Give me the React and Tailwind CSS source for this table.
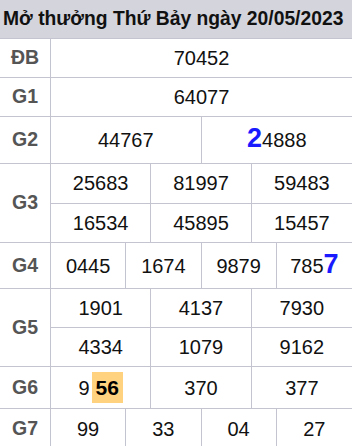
const line = "border-[#c4c4d0]";

function Row({ label, h, children }) {
  return (
    <div className={`flex border-t ${line} ${h}`}>
      <div
        className={`w-[51px] shrink-0 border-r ${line} flex items-center justify-center font-bold text-[19.5px] text-[#555]`}
      >
        {label}
      </div>
      <div className="flex-1 flex flex-col">{children}</div>
    </div>
  );
}

function Cells({ cols, items, className = "" }) {
  const grid = {
    1: "grid-cols-1",
    2: "grid-cols-2",
    3: "grid-cols-3",
    4: "grid-cols-4",
  }[cols];
  return (
    <div className={`grid ${grid} divide-x divide-[#c4c4d0] flex-1 ${className}`}>
      {items.map((it, i) => (
        <div key={i} className="flex items-center justify-center text-[20px] text-[#111]">
          {it}
        </div>
      ))}
    </div>
  );
}

const Blue = ({ children }) => (
  <span className="font-bold text-[27px] leading-none text-[#1a1aff]">{children}</span>
);

export default function App() {
  return (
    <div className="w-[352px] h-[446px] overflow-hidden bg-white font-['Liberation_Sans',Arial,sans-serif]">
      <div className="h-[38px] bg-[#d4d5dc] flex items-center pl-[3px] text-[19.3px] font-bold text-[#111] whitespace-nowrap">
        Mở thưởng Thứ Bảy ngày 20/05/2023
      </div>

      <Row label="ĐB" h="h-[39px]">
        <Cells cols={1} items={["70452"]} />
      </Row>
      <Row label="G1" h="h-[39px]">
        <Cells cols={1} items={["64077"]} />
      </Row>
      <Row label="G2" h="h-[47px]">
        <Cells
          cols={2}
          items={[
            "44767",
            <span className="flex items-baseline">
              <Blue>2</Blue>4888
            </span>,
          ]}
        />
      </Row>
      <Row label="G3" h="h-[79px]">
        <Cells cols={3} items={["25683", "81997", "59483"]} />
        <Cells cols={3} items={["16534", "45895", "15457"]} className={`border-t ${line}`} />
      </Row>
      <Row label="G4" h="h-[46px]">
        <Cells
          cols={4}
          items={[
            "0445",
            "1674",
            "9879",
            <span className="flex items-baseline">
              785<Blue>7</Blue>
            </span>,
          ]}
        />
      </Row>
      <Row label="G5" h="h-[78px]">
        <Cells cols={3} items={["1901", "4137", "7930"]} />
        <Cells cols={3} items={["4334", "1079", "9162"]} className={`border-t ${line}`} />
      </Row>
      <Row label="G6" h="h-[42px]">
        <Cells
          cols={3}
          items={[
            <span className="flex items-center">
              9
              <span className="ml-[2px] w-[31px] h-[31px] bg-[#ffd27f] flex items-center justify-center font-bold text-[21px] text-black">
                56
              </span>
            </span>,
            "370",
            "377",
          ]}
        />
      </Row>
      <Row label="G7" h="h-[40px]">
        <Cells cols={4} items={["99", "33", "04", "27"]} />
      </Row>
    </div>
  );
}
